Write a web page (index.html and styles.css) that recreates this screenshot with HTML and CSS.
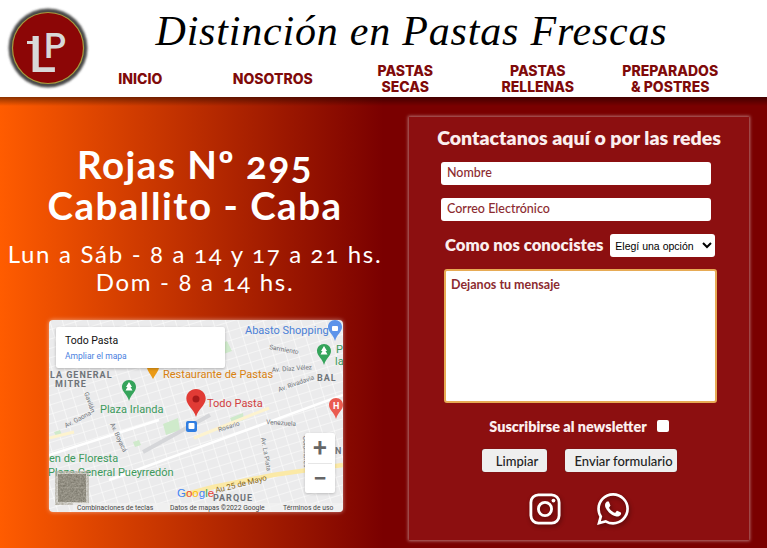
FILE: index.html
```html
<!DOCTYPE html>
<html lang="en">
<head>
  <meta charset="UTF-8">
  <title>Todo Pasta - Contacto</title>
  <link rel="stylesheet" href="styles.css">
</head>
<body>

  <header class="top">
    <svg class="logo" viewBox="0 0 84 84">
      <defs>
        <filter id="soft"><feGaussianBlur stdDeviation="1"/></filter>
      </defs>
      <circle cx="42" cy="42" r="39.500" fill="#4a4a48" filter="url(#soft)"/>
      <circle cx="42" cy="42" r="35.500" fill="#8c0606" stroke="#a89a3c" stroke-width="1.200"/>
      <rect x="21" y="35" width="11" height="3" fill="#d8d8d8"/>
      <text class="logo-mark"><tspan x="23" y="66" class="logo-l">L</tspan><tspan x="38" y="52" class="logo-p">P</tspan></text>
    </svg>
    <div class="top-right">
      <h1 class="slogan">Distinción en Pastas Frescas</h1>
      <nav class="menu">
        <a href="#">INICIO</a>
        <a href="#">NOSOTROS</a>
        <a href="#">PASTAS<br>SECAS</a>
        <a href="#">PASTAS<br>RELLENAS</a>
        <a href="#">PREPARADOS<br>&amp; POSTRES</a>
      </nav>
    </div>
  </header>

  <main class="content">
    <section class="info">
      <h2>Rojas Nº 295<br>Caballito - Caba</h2>
      <p>Lun a Sáb - 8 a 14 y 17 a 21 hs.<br>Dom - 8 a 14 hs.</p>

      <div class="map">
        <svg class="map-art" viewBox="0 0 294 192">
          <defs>
            <pattern id="blocks" width="12" height="9" patternUnits="userSpaceOnUse" patternTransform="rotate(-17)">
              <rect width="12" height="9" fill="#ebebec"/>
              <path d="M0 0H12M0 0V9" stroke="#fff" stroke-width="1.100"/>
            </pattern>
            <filter id="sat">
              <feTurbulence type="fractalNoise" baseFrequency=".55" numOctaves="2"/>
              <feColorMatrix values="0 0 0 0 .42  0 0 0 0 .40  0 0 0 0 .34  .9 0 0 0 .2"/>
            </filter>
          </defs>
          <rect width="294" height="192" fill="url(#blocks)"/>
          <path d="M114 104l15-6 2 12-14 5zM181 98l13-5 1 7-12 3zM84 122l6-2 2 5-6 2zM5 112l6-2 2 5-6 1zM163 26l15-5 5 10-14 5z" fill="#cfeacb"/>
          <path d="M60 160L294 75M0 135L110 100" stroke="#fff" stroke-width="2.500" fill="none"/>
          <path d="M94 132L161 95" stroke="#d5d6d9" stroke-width="4" fill="none"/>
          <path d="M134 175L164 167L224 155L294 145" stroke="#fbe9a6" stroke-width="4.500" fill="none"/>
          <path d="M0 118L25 112M145 118L220 88" stroke="#fdf3cf" stroke-width="3" fill="none"/>

          <text class="lbl blue" x="196" y="14">Abasto Shopping</text>
          <text class="lbl orange" x="114" y="58">Restaurante de Pastas</text>
          <text class="lbl green" x="51" y="93">Plaza Irlanda</text>
          <text class="lbl red" x="158" y="87">Todo Pasta</text>
          <text class="lbl green" x="0" y="142">en de Floresta</text>
          <text class="lbl green" x="-1" y="156">Plaza General Pueyrredón</text>
          <text class="lbl green" x="287" y="33">P</text>
          <text class="lbl green" x="286" y="45">la</text>

          <text class="area" x="1" y="58">LA GENERAL</text>
          <text class="area" x="6" y="67">MITRE</text>
          <text class="area" x="268" y="61">BAL</text>
          <text class="area" x="164" y="181">PARQUE</text>
          <text class="area" x="286" y="134">N</text>

          <text class="street" transform="translate(220 29) rotate(10)">Sarmiento</text>
          <text class="street" transform="translate(223 52) rotate(-4)">Av. Díaz Vélez</text>
          <text class="street" transform="translate(230 72) rotate(-20)">Av. Rivadavia</text>
          <text class="street" transform="translate(170 112) rotate(-18)">Rosario</text>
          <text class="street" transform="translate(217 104) rotate(4)">Venezuela</text>
          <text class="street" transform="translate(212 118) rotate(80)">Av. La Plata</text>
          <text class="street" transform="translate(254 116) rotate(88)">Colombres</text>
          <text class="street" transform="translate(17 108) rotate(-28)">Av. Gaona</text>
          <text class="street" transform="translate(35 73) rotate(70)">Gavilán</text>
          <text class="street" transform="translate(61 104) rotate(65)">Av. Boyacá</text>
          <text class="road" transform="translate(167 173) rotate(-14)">Au 25 de Mayo</text>

          <!-- pines -->
          <path d="M147 69c-5.500 0-9.700 4.300-9.700 9.600 0 6.900 7.300 10 9.700 18.400 2.400-8.400 9.700-11.500 9.700-18.400 0-5.300-4.200-9.600-9.700-9.600z" fill="#e13b35"/>
          <circle cx="147" cy="79" r="3.500" fill="#a71a1a"/>
          <rect x="137" y="101" width="11" height="11" rx="2" fill="#2f7de1"/>
          <rect x="139.500" y="103" width="6" height="6" rx="1" fill="#fff"/>
          <path d="M98 47h12c0 3-2 5-6 12-4-7-6-9-6-12z" fill="#ea9a16"/>
          <path d="M80 60c-4 0-7 3-7 7 0 5 5 7 7 14 2-7 7-9 7-14 0-4-3-7-7-7z" fill="#35a45b"/>
          <path d="M80 62l-3 5h1.500l-2 3.500h7l-2-3.500h1.500z" fill="#fff"/>
          <path d="M275 24c-4 0-7 3-7 7 0 5 5 7 7 14 2-7 7-9 7-14 0-4-3-7-7-7z" fill="#35a45b"/>
          <path d="M275 26l-3 5h1.500l-2 3.500h7l-2-3.500h1.500z" fill="#fff"/>
          <path d="M287 78c-4 0-7 3-7 7 0 5 5 7 7 14 2-7 7-9 7-14 0-4-3-7-7-7z" fill="#ea5b50"/>
          <text class="hosp" x="284" y="89">H</text>
          <path d="M286 0c-4 0-7 3-7 7 0 5 5 7 7 14 2-7 7-9 7-14 0-4-3-7-7-7z" fill="#5c93ea"/>
          <rect x="283" y="6" width="6" height="5" rx="1" fill="#fff"/>

          <text class="google" x="128" y="177"><tspan fill="#4285f4">G</tspan><tspan fill="#ea4335">o</tspan><tspan fill="#fbbc05">o</tspan><tspan fill="#4285f4">g</tspan><tspan fill="#34a853">l</tspan><tspan fill="#ea4335">e</tspan></text>

          <rect x="8" y="153" width="30" height="30" fill="#fff"/>
          <rect x="9" y="154" width="28" height="28" fill="#5f5c50"/>
          <rect x="9" y="154" width="28" height="28" filter="url(#sat)"/>

          <rect x="24" y="183" width="270" height="9" fill="#f2f2f2" fill-opacity=".75"/>
          <text class="legal" x="28" y="190">Combinaciones de teclas</text>
          <text class="legal" x="121" y="190">Datos de mapas ©2022 Google</text>
          <text class="legal" x="234" y="190">Términos de uso</text>
        </svg>

        <div class="map-card">
          <strong>Todo Pasta</strong>
          <a href="#">Ampliar el mapa</a>
        </div>
        <div class="map-zoom">
          <span>+</span>
          <span>−</span>
        </div>
      </div>
    </section>

    <section class="panel">
      <h3>Contactanos aquí o por las redes</h3>
      <form class="contact">
        <input type="text" placeholder="Nombre">
        <input type="email" placeholder="Correo Electrónico">
        <div class="how">
          <label for="how">Como nos conocistes</label>
          <select id="how">
            <option>Elegí una opción</option>
          </select>
        </div>
        <textarea placeholder="Dejanos tu mensaje"></textarea>
        <div class="news">
          <label for="news">Suscribirse al newsletter</label>
          <input type="checkbox" id="news">
        </div>
        <div class="actions">
          <button type="reset" class="btn-clear">Limpiar</button>
          <button type="submit" class="btn-send">Enviar formulario</button>
        </div>
      </form>
      <div class="social">
        <svg class="icon" viewBox="0 0 34 34" fill="none" stroke="#fff" stroke-width="3">
          <rect x="2" y="2" width="30" height="30" rx="8"/>
          <circle cx="17" cy="17" r="7"/>
          <circle cx="26" cy="8" r="2" fill="#fff" stroke="none"/>
        </svg>
        <svg class="icon" viewBox="0 0 24 24" fill="#fff">
          <path d="M17.472 14.382c-.297-.149-1.758-.867-2.03-.967-.273-.099-.471-.148-.67.15-.197.297-.767.966-.94 1.164-.173.199-.347.223-.644.075-.297-.15-1.255-.463-2.39-1.475-.883-.788-1.48-1.761-1.653-2.059-.173-.297-.018-.458.13-.606.134-.133.298-.347.446-.52.149-.174.198-.298.298-.497.099-.198.05-.371-.025-.52-.075-.149-.669-1.612-.916-2.207-.242-.579-.487-.5-.669-.51-.173-.008-.371-.01-.57-.01-.198 0-.52.074-.792.372-.272.297-1.04 1.016-1.04 2.479 0 1.462 1.065 2.875 1.213 3.074.149.198 2.096 3.2 5.077 4.487.709.306 1.262.489 1.694.625.712.227 1.36.195 1.871.118.571-.085 1.758-.719 2.006-1.413.248-.694.248-1.289.173-1.413-.074-.124-.272-.198-.57-.347m-5.421 7.403h-.004a9.87 9.87 0 01-5.031-1.378l-.361-.214-3.741.982.998-3.648-.235-.374a9.86 9.86 0 01-1.51-5.26c.001-5.45 4.436-9.884 9.888-9.884 2.64 0 5.122 1.03 6.988 2.898a9.825 9.825 0 012.893 6.994c-.003 5.45-4.437 9.884-9.885 9.884m8.413-18.297A11.815 11.815 0 0012.05 0C5.495 0 .16 5.335.157 11.892c0 2.096.547 4.142 1.588 5.945L.057 24l6.305-1.654a11.882 11.882 0 005.683 1.448h.005c6.554 0 11.89-5.335 11.893-11.893a11.821 11.821 0 00-3.48-8.413z"/>
        </svg>
      </div>
    </section>
  </main>

</body>
</html>
```

FILE: styles.css
```css
* {
  box-sizing: border-box;
}

html, body {
  height: 100%;
}

body {
  margin: 0;
  overflow: hidden;
  display: flex;
  flex-direction: column;
  font-family: 'Lato', sans-serif;
  background-color: #7a0000;
}

/* header */
.top {
  display: flex;
  height: 97px;
  padding-left: 6px;
  background-color: white;
}

.logo {
  width: 84px;
  height: 84px;
  margin-top: 6px;
  flex: none;
}

.logo-mark {
  font-family: 'Roboto', sans-serif;
  font-weight: 500;
  fill: #d8d8d8;
}

.logo-l {
  font-size: 50px;
}

.logo-p {
  font-size: 35px;
}

.top-right {
  flex: 1;
  display: flex;
  flex-direction: column;
  min-width: 0;
}

.slogan {
  height: 63px;
  margin: 0;
  padding-right: 34px;
  text-align: center;
  font-family: 'Liberation Serif', serif;
  font-style: italic;
  font-weight: normal;
  font-size: 42px;
  line-height: 62px;
  letter-spacing: .8px;
  white-space: nowrap;
  color: black;
}

.menu {
  display: grid;
  grid-template-columns: repeat(5, 132.5px);
  margin-left: -16px;
  align-items: center;
  height: 32px;
}

.menu a {
  text-align: center;
  font-family: 'Inter', sans-serif;
  font-weight: 800;
  font-size: 14px;
  line-height: 16px;
  color: #7f0a0a;
  text-decoration: none;
}

/* main */
.content {
  flex: 1;
  display: flex;
  background: linear-gradient(180deg, rgba(0, 0, 0, .45) 0, rgba(0, 0, 0, 0) 9px),
    linear-gradient(90deg, #ff5c00 0%, #7a0000 50%);
}

.info {
  width: 390px;
  flex: none;
  padding-top: 47px;
  color: white;
  text-align: center;
}

.info h2 {
  margin: 0;
  font-size: 38.500px;
  line-height: 41px;
  font-weight: 700;
  letter-spacing: 1.500px;
  font-variant-numeric: oldstyle-nums;
}

.info p {
  margin: 14px 0 0;
  font-size: 24px;
  line-height: 28px;
  letter-spacing: 1.700px;
  font-variant-numeric: oldstyle-nums;
}

/* google map */
.map {
  position: relative;
  width: 294px;
  height: 192px;
  margin: 24px 0 0 49px;
  border-radius: 4px;
  overflow: hidden;
  text-align: left;
  font-family: 'Roboto', sans-serif;
  box-shadow: 0 0 4px rgba(255, 255, 255, .5);
}

.map-art {
  display: block;
  width: 100%;
  height: 100%;
}

.lbl {
  font-family: 'Roboto', sans-serif;
  font-size: 11px;
}

.blue { fill: #4a80d6; }
.orange { fill: #d8810f; }
.green { fill: #3d9a5c; }
.red { fill: #d23f3f; }

.area {
  font-family: 'Roboto', sans-serif;
  font-size: 9px;
  font-weight: 700;
  letter-spacing: 1px;
  fill: #6e7378;
}

.street {
  font-family: 'Roboto', sans-serif;
  font-size: 6.500px;
  fill: #70757a;
}

.road {
  font-family: 'Roboto', sans-serif;
  font-size: 8px;
  fill: #8a6a1c;
}

.hosp {
  font-family: 'Roboto', sans-serif;
  font-size: 9px;
  font-weight: 700;
  fill: white;
}

.google {
  font-family: 'Liberation Sans', sans-serif;
  font-size: 11.500px;
}

.legal {
  font-family: 'Roboto', sans-serif;
  font-size: 6.800px;
  fill: #444;
}

.map-card {
  position: absolute;
  top: 7px;
  left: 7px;
  width: 169px;
  height: 41px;
  padding: 7px 9px;
  display: flex;
  flex-direction: column;
  gap: 4px;
  border-radius: 2px;
  background-color: white;
  box-shadow: 0 1px 3px rgba(0, 0, 0, .25);
}

.map-card strong {
  font-weight: 400;
  font-size: 10.500px;
  line-height: 13px;
  color: #111;
}

.map-card a {
  font-size: 8.500px;
  line-height: 11px;
  color: #4a80e0;
  text-decoration: none;
}

.map-zoom {
  position: absolute;
  top: 113px;
  left: 256px;
  width: 30px;
  height: 60px;
  display: flex;
  flex-direction: column;
  border-radius: 2px;
  background-color: white;
  box-shadow: 0 1px 3px rgba(0, 0, 0, .2);
}

.map-zoom span {
  flex: 1;
  text-align: center;
  font-size: 25px;
  font-weight: 500;
  line-height: 30px;
  color: #666;
}

.map-zoom span + span {
  border-top: 1px solid #e6e6e6;
  margin: 0 3px;
}

/* contact panel */
.panel {
  width: 340px;
  height: 423px;
  margin: 20px 0 0 19px;
  padding-top: 10px;
  background-color: #8c0f10;
  box-shadow: 0 0 3px 1px rgba(255, 255, 255, .45);
  color: #fbeeee;
}

.panel h3 {
  margin: 0;
  text-align: center;
  font-size: 19.500px;
  line-height: 22px;
  font-weight: 800;
}

.contact {
  display: flex;
  flex-direction: column;
  align-items: flex-start;
  padding: 0 32px;
  margin-top: 13px;
}

.contact input[type="text"],
.contact input[type="email"] {
  width: 270px;
  height: 23px;
  margin-bottom: 13px;
  padding: 0 6px 2px;
  border: 0;
  border-radius: 3px;
  background-color: white;
  font-family: 'Lato', sans-serif;
  font-size: 12.500px;
  font-weight: 500;
}

.contact input[type="email"] {
  margin-bottom: 12px;
}

.contact input::placeholder {
  color: #8c2b30;
  opacity: 1;
}

.how {
  display: flex;
  align-items: center;
  gap: 7px;
  width: 100%;
  height: 25px;
  padding-left: 4px;
}

.how label {
  padding-bottom: 2px;
  font-size: 16.700px;
  font-weight: 800;
  white-space: nowrap;
}

.how select {
  width: 105px;
  height: 23px;
  padding: 0 1px;
  border: 0;
  border-radius: 3px;
  background-color: white;
  font-family: 'Liberation Sans', sans-serif;
  font-size: 10.500px;
  color: black;
}

.contact textarea {
  width: 273px;
  height: 134px;
  margin: 11px 0 0 3px;
  padding: 6px 5px;
  border: 2px solid #e7ab55;
  border-radius: 3px;
  background-color: white;
  resize: none;
  font-family: 'Lato', sans-serif;
  font-size: 12.500px;
  font-weight: 700;
}

.contact textarea::placeholder {
  color: #8c2b30;
  opacity: 1;
}

.news {
  display: flex;
  align-items: center;
  justify-content: center;
  gap: 10px;
  width: 100%;
  margin-top: 15px;
  font-size: 14.400px;
  font-weight: 800;
  white-space: nowrap;
}

.news input {
  width: 12px;
  height: 12px;
  margin: 0 0 2px;
  appearance: none;
  background-color: white;
  border-radius: 2px;
}

.actions {
  display: flex;
  justify-content: center;
  gap: 18px;
  width: 100%;
  margin-top: 14px;
}

.actions button {
  height: 23px;
  padding: 0 0 0 6px;
  border: 0;
  border-radius: 3px;
  background-color: #efefef;
  font-family: 'Lato', sans-serif;
  font-size: 13px;
  font-weight: 500;
  color: #222;
  box-shadow: 0 0 1px #333;
}

.btn-clear {
  width: 65px;
}

.btn-send {
  width: 112px;
}

.social {
  display: flex;
  justify-content: center;
  gap: 36px;
  margin-top: 21px;
}

.icon {
  width: 32px;
  height: 32px;
  filter: drop-shadow(1px 2px 2px rgba(0, 0, 0, .4));
}
```
